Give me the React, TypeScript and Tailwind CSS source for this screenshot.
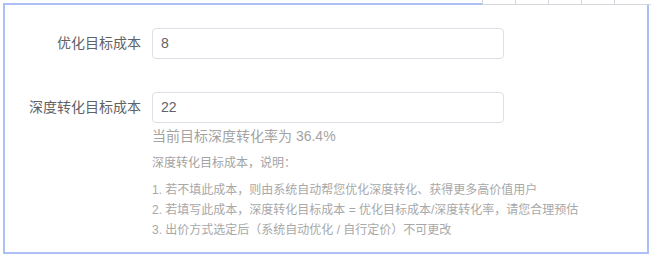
const font = { fontFamily: '"Liberation Sans", "Noto Sans CJK SC", sans-serif' };

export default function App() {
  return (
    <div className="relative h-[257px] w-[651px] bg-white" style={font}>
      {/* table header strip peeking in at the top right */}
      <div className="absolute left-[482px] top-0 flex h-[5px] w-[169px] border-b border-[#d4d8dc] bg-white">
        <div className="w-[33px] border-l border-[#d4d8dc]" />
        <div className="w-[33px] border-l border-[#d4d8dc]" />
        <div className="w-[33px] border-l border-[#d4d8dc]" />
        <div className="w-[33px] border-l border-[#d4d8dc]" />
        <div className="w-[37px] border-l border-[#d4d8dc]" />
      </div>

      <div className="ml-[3px] pt-[3px]">
        <div className="h-[251px] w-[646px] border-2 border-[#adc0f6] pt-[23px]">
          {/* 优化目标成本 */}
          <div className="flex items-center">
            <label className="w-[147px] pr-[11px] text-right text-[14px] text-[#606266]">优化目标成本</label>
            <div className="flex h-[31px] w-[352px] items-center rounded-[4px] border border-[#dcdfe6] px-[8px] text-[14px] text-[#606266]">
              8
            </div>
          </div>

          {/* 深度转化目标成本 */}
          <div className="mt-[33px] flex items-start">
            <label className="flex h-[31px] w-[147px] items-center justify-end pr-[11px] text-[14px] text-[#606266]">
              深度转化目标成本
            </label>
            <div>
              <div className="flex h-[31px] w-[352px] items-center rounded-[4px] border border-[#dcdfe6] px-[8px] text-[14px] text-[#606266]">
                22
              </div>
              <p className="mt-[3px] text-[14px] leading-[20px] text-[#a3a3a3]">当前目标深度转化率为 36.4%</p>
              <p className="mt-[8px] text-[12px] leading-[18px] text-[#a3a3a3]">深度转化目标成本，说明：</p>
              <ul className="mt-[8px] text-[12px] leading-[20px] text-[#a8a8a8]">
                <li>1. 若不填此成本，则由系统自动帮您优化深度转化、获得更多高价值用户</li>
                <li>2. 若填写此成本，深度转化目标成本 = 优化目标成本/深度转化率，请您合理预估</li>
                <li>3. 出价方式选定后（系统自动优化 / 自行定价）不可更改</li>
              </ul>
            </div>
          </div>
        </div>
      </div>
    </div>
  );
}
